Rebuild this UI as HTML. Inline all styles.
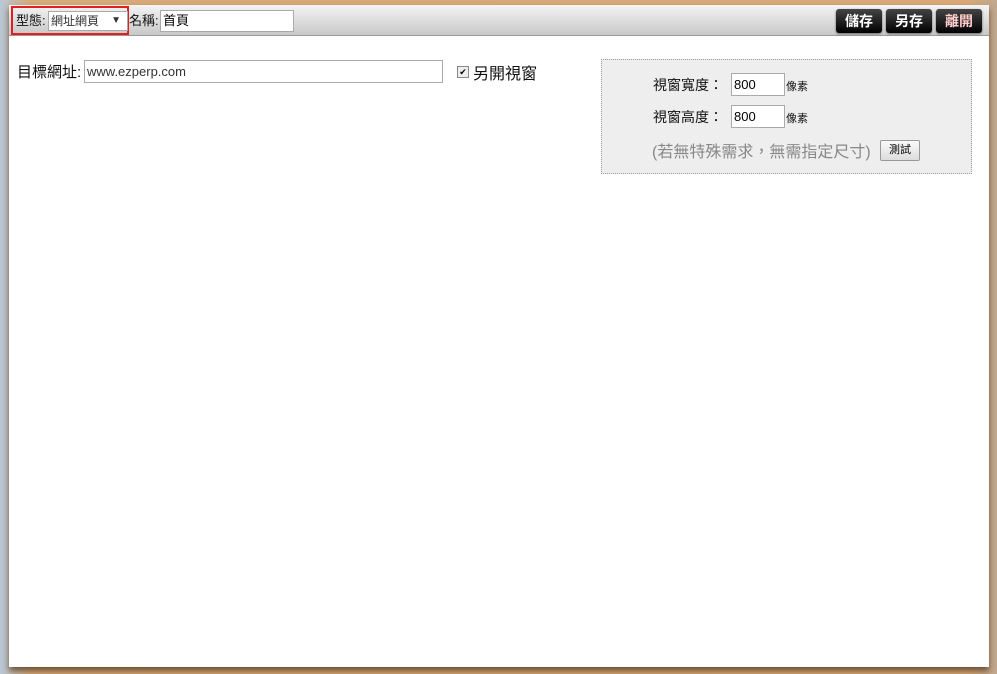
<!DOCTYPE html>
<html><head><meta charset="utf-8"><style>
body{margin:0;width:997px;height:674px;overflow:hidden;background:linear-gradient(90deg,#b8c8d8 0,#d8ab7a 3%,#d9aa78 97%,#c0a890 100%);font-family:"Liberation Sans","Noto Sans CJK TC",sans-serif;position:relative}
.panel{position:absolute;left:9px;top:5px;width:980px;height:662px;background:#fff;box-shadow:0 4px 6px rgba(60,40,20,.7)}
.bar{position:absolute;left:0;top:0;width:980px;height:30px;background:linear-gradient(#f4f4f4,#c8c8c8);border-bottom:1px solid #999}
.t{position:absolute;font-size:14px;color:#111;white-space:nowrap}
.sel{position:absolute;border:1px solid #aaa;background:#fff;font-size:13px;padding:0 2px;box-sizing:border-box;font-family:inherit}
.btn{position:absolute;top:4px;width:46px;height:24px;background:linear-gradient(#444,#000);border-radius:3px;color:#fff;font-weight:bold;font-size:14px;text-align:center;line-height:24px;box-shadow:0 1px 2px #666}
.box{position:absolute;left:592px;top:54px;width:369px;height:113px;background:#eee;border:1px dotted #999}
</style></head><body>
<div class="panel">
<div class="bar">
<div style="position:absolute;left:2px;top:1px;width:118px;height:29px;border:2px solid #e02020;box-sizing:border-box"></div>
<span class="t" style="left:7px;top:5px;font-size:13px">型態:</span>
<div class="sel" style="left:39px;top:6px;width:80px;height:20px;line-height:18px;font-size:12px;color:#333">網址網頁 <span style="position:absolute;right:6px;font-size:10px">▼</span></div>
<span class="t" style="left:120px;top:5px;font-size:13px">名稱:</span>
<div class="sel" style="left:151px;top:5px;width:134px;height:22px;line-height:20px">首頁</div>
<div class="btn" style="left:827px">儲存</div>
<div class="btn" style="left:877px">另存</div>
<div class="btn" style="left:927px;color:#fcc">離開</div>
</div>
<span class="t" style="left:8px;top:56px;font-size:15px">目標網址:</span>
<div class="sel" style="left:75px;top:55px;width:359px;height:23px;line-height:21px;color:#333">www.ezperp.com</div>
<div style="position:absolute;left:448px;top:61px;width:10px;height:10px;border:1px solid #888;background:#eee;font-size:9px;line-height:10px;text-align:center">✔</div>
<span class="t" style="left:464px;top:55px;font-size:16px">另開視窗</span>
<div class="box">
<span class="t" style="left:51px;top:15px">視窗寬度：</span>
<div class="sel" style="left:129px;top:13px;width:54px;height:23px;line-height:21px;font-size:13px">800</div>
<span class="t" style="left:184px;top:18px;font-size:11px">像素</span>
<span class="t" style="left:51px;top:47px">視窗高度：</span>
<div class="sel" style="left:129px;top:45px;width:54px;height:23px;line-height:21px;font-size:13px">800</div>
<span class="t" style="left:184px;top:50px;font-size:11px">像素</span>
<span class="t" style="left:50px;top:78px;color:#888;font-size:16px">(若無特殊需求，無需指定尺寸)</span>
<div style="position:absolute;left:278px;top:80px;width:38px;height:19px;border:1px solid #999;border-radius:2px;background:linear-gradient(#fafafa,#ddd);font-size:11px;text-align:center;line-height:19px">測試</div>
</div>
</div>
</body></html>
